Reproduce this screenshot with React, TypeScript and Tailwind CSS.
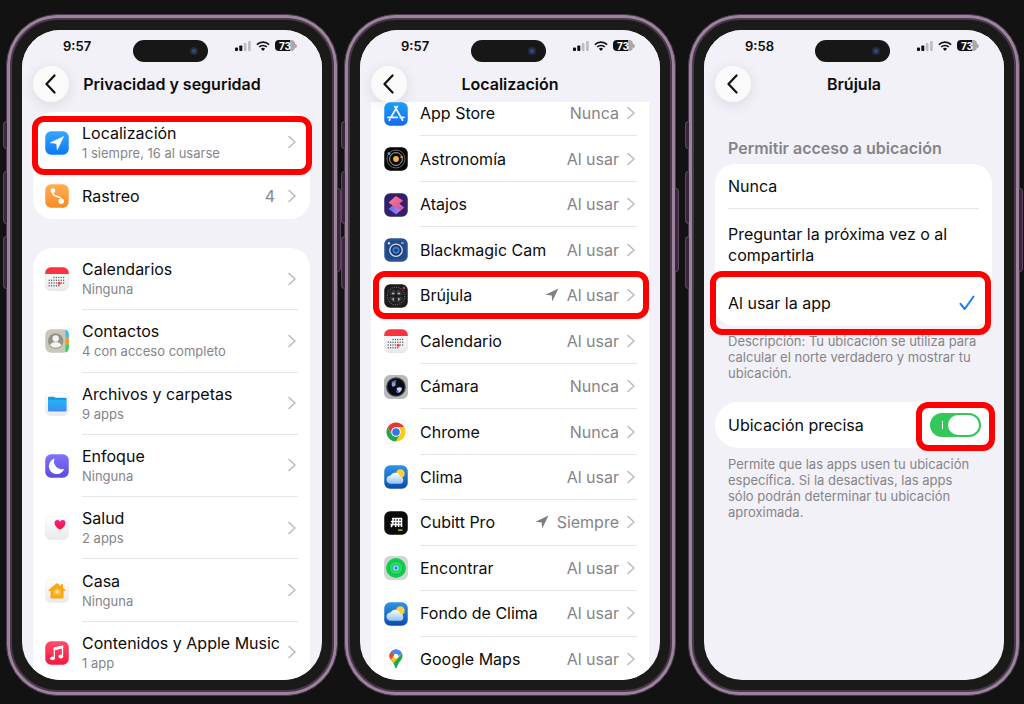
import type { ReactNode } from "react";

interface AppRow {
  name: string;
  access: string;
  icon: ReactNode;
  recent?: boolean;
  highlighted?: boolean;
}

interface PermissionRow {
  name: string;
  detail: string;
  icon: ReactNode;
}

// Shared by every app icon, so they are declared once for the page
function IconGradients() {
  return (
    <svg className="absolute size-0" aria-hidden="true">
      <defs>
        <linearGradient id="blue" x1="0" y1="0" x2="0" y2="1">
          <stop offset="0" stopColor="#37a6ff" />
          <stop offset="1" stopColor="#0a78fa" />
        </linearGradient>
        <linearGradient id="store" x1="0" y1="0" x2="0" y2="1">
          <stop offset="0" stopColor="#1fa5f8" />
          <stop offset="1" stopColor="#1767ee" />
        </linearGradient>
        <linearGradient id="orange" x1="0" y1="0" x2="0" y2="1">
          <stop offset="0" stopColor="#ffae55" />
          <stop offset="1" stopColor="#fb8a24" />
        </linearGradient>
        <linearGradient id="purple" x1="0" y1="0" x2="0" y2="1">
          <stop offset="0" stopColor="#8173fb" />
          <stop offset="1" stopColor="#5a4de0" />
        </linearGradient>
        <linearGradient id="pink" x1="0" y1="0" x2="0" y2="1">
          <stop offset="0" stopColor="#ff4d6a" />
          <stop offset="1" stopColor="#fa1540" />
        </linearGradient>
        <linearGradient id="heart" x1="0" y1="0" x2="0" y2="1">
          <stop offset="0" stopColor="#fb1c8e" />
          <stop offset="1" stopColor="#fb1230" />
        </linearGradient>
        <linearGradient id="paper" x1="0" y1="0" x2="0" y2="1">
          <stop offset="0" stopColor="#ffffff" />
          <stop offset="1" stopColor="#e9e9eb" />
        </linearGradient>
        <linearGradient id="sky" x1="0" y1="0" x2="0" y2="1">
          <stop offset="0" stopColor="#2f93e6" />
          <stop offset="1" stopColor="#0c4cae" />
        </linearGradient>
        <linearGradient id="cloud" x1="0" y1="0" x2="0" y2="1">
          <stop offset="0" stopColor="#ffffff" />
          <stop offset="1" stopColor="#8fc4f3" />
        </linearGradient>
        <linearGradient id="folder" x1="0" y1="0" x2="0" y2="1">
          <stop offset="0" stopColor="#22b4f6" />
          <stop offset="1" stopColor="#3f8bf0" />
        </linearGradient>
        <linearGradient id="warm" x1="0" y1="0" x2="1" y2="1">
          <stop offset="0" stopColor="#ff7d88" />
          <stop offset="1" stopColor="#d64a9c" />
        </linearGradient>
        <linearGradient id="cool" x1="0" y1="0" x2="1" y2="0">
          <stop offset="0" stopColor="#5a6df0" />
          <stop offset="1" stopColor="#c58af0" />
        </linearGradient>
      </defs>
    </svg>
  );
}

function IconTile({ children, fill, stroke }: { children?: ReactNode; fill: string; stroke?: string }) {
  return (
    <svg viewBox="0 0 24 24" className="size-6 shrink-0" aria-hidden="true">
      <rect x="0.25" y="0.25" width="23.5" height="23.5" rx="5.8" fill={fill} stroke={stroke} strokeWidth="0.5" />
      {children}
    </svg>
  );
}

function LocationIcon() {
  return (
    <IconTile fill="url(#blue)">
      <path d="M18.6 5.6 5.3 11.7l6.3.8.7 6.2z" fill="#fff" stroke="#fff" strokeWidth="0.6" strokeLinejoin="round" />
    </IconTile>
  );
}

function TrackingIcon() {
  return (
    <IconTile fill="url(#orange)">
      <path
        d="M7.8 6.6c-.5 4.8 1.5 5.2 4.2 5.8 2.900.7 4.300 1.300 4.300 5"
        fill="none"
        stroke="#fff"
        strokeWidth="1.5"
        strokeLinecap="round"
      />
      <circle cx="7.9" cy="6.7" r="2.4" fill="#fff" />
      <circle cx="16.2" cy="17.2" r="2.7" fill="#fff" />
    </IconTile>
  );
}

const calendarDots = [
  [9, 10.5], [11.4, 10.5], [13.8, 10.5], [16.2, 10.5], [18.6, 10.5],
  [4.2, 13.3], [6.6, 13.3], [9, 13.3], [11.4, 13.3], [13.8, 13.3], [16.2, 13.3], [18.6, 13.3],
  [4.2, 16], [6.6, 16], [9, 16], [11.4, 16], [16.2, 16], [18.6, 16],
  [4.2, 18.7], [6.6, 18.7], [9, 18.7], [11.4, 18.7], [13.8, 18.7],
];

function CalendarIcon() {
  return (
    <IconTile fill="url(#paper)" stroke="#dedee0">
      <path d="M.2 7V6A5.800 5.800 0 0 1 6 .2h12A5.800 5.800 0 0 1 23.800 6v1z" fill="#f9343f" />
      {calendarDots.map(([x, y]) => (
        <circle key={`${x}-${y}`} cx={x} cy={y} r="0.7" fill="#5a5a5c" />
      ))}
      <circle cx="14.2" cy="16.2" r="1.5" fill="#fa3a40" />
    </IconTile>
  );
}

function ContactsIcon() {
  return (
    <IconTile fill="#c9c8b8">
      <path d="M20.500.4c2 .6 3.300 2.700 3.300 5.400V8h-3.300z" fill="#39b9f5" />
      <path d="M20.500 8h3.300v7.500h-3.300z" fill="#fd9528" />
      <path d="M20.500 15.500h3.300v2.700c0 2.700-1.300 4.800-3.300 5.400z" fill="#2fd35c" />
      <circle cx="10.7" cy="12" r="7.7" fill="#93938a" />
      <circle cx="10.7" cy="9.5" r="3.2" fill="#f4f4ee" />
      <path d="M5 16.300c1-2.500 3.200-3.400 5.700-3.400s4.700.9 5.700 3.400a7.700 7.700 0 0 1-11.400 0z" fill="#f4f4ee" />
    </IconTile>
  );
}

function FilesIcon() {
  return (
    <IconTile fill="url(#paper)" stroke="#e6e6e8">
      <path d="M3 6.200c0-.9.5-1.400 1.400-1.400h4.200c.9 0 1.200 1 2.100 1h9.500c.9 0 1.400.5 1.400 1.400V9H3z" fill="#1a98e0" />
      <path d="M3 8h18.600v10.200c0 .9-.5 1.400-1.400 1.400H4.400c-.9 0-1.400-.5-1.400-1.400z" fill="url(#folder)" />
    </IconTile>
  );
}

function FocusIcon() {
  return (
    <IconTile fill="url(#purple)">
      <path d="M9.600 4.600a7.600 7.600 0 0 0 9.700 10.100A7.900 7.900 0 1 1 9.600 4.600z" fill="#fff" />
    </IconTile>
  );
}

function HealthIcon() {
  return (
    <IconTile fill="url(#paper)" stroke="#ececee">
      <path
        d="M15 13.800c-3.500-2.400-5.500-4.500-5.500-6.900 0-3.300 4-4.100 5.500-1.400 1.500-2.700 5.500-1.900 5.500 1.400 0 2.400-2 4.500-5.500 6.900z"
        fill="url(#heart)"
      />
    </IconTile>
  );
}

function HomeIcon() {
  return (
    <IconTile fill="url(#paper)" stroke="#ececee">
      <path
        d="M12 4 3.800 10.800c-.5.5-.2 1.200.5 1.200h1.200v6c0 1 .5 1.500 1.500 1.500h10c1 0 1.500-.5 1.500-1.500v-6h1.200c.7 0 1-.7.500-1.200L18 9V5.200h-2.200v2z"
        fill="#fda50f"
      />
      <path d="m12 8.500-4 3.300v4.700h8v-4.700z" fill="#fdba2c" />
      <circle cx="12" cy="12.8" r="1.8" fill="#fff2bd" />
    </IconTile>
  );
}

function MusicIcon() {
  return (
    <IconTile fill="url(#pink)">
      <path d="M9.300 17V7.200l8.200-1.800V15" fill="none" stroke="#fff" strokeWidth="1.3" />
      <path d="m8.700 6.600 9.400-2.200v2.900L8.700 9.400z" fill="#fff" />
      <ellipse cx="7.5" cy="17.3" rx="2.4" ry="1.9" fill="#fff" />
      <ellipse cx="15.8" cy="15.5" rx="2.4" ry="1.9" fill="#fff" />
    </IconTile>
  );
}

function AppStoreIcon() {
  return (
    <IconTile fill="url(#store)">
      <path
        d="M13.200 4.500 6.900 15.400M10.800 4.500l7.700 13.600M4 15.400h9.300M16.300 15.400H20M5.900 17.300l-.5.900"
        fill="none"
        stroke="#e9f6ff"
        strokeWidth="1.8"
        strokeLinecap="round"
      />
    </IconTile>
  );
}

function AstronomyIcon() {
  return (
    <IconTile fill="#060606">
      <circle cx="12" cy="12" r="9" fill="none" stroke="#77705f" strokeWidth="0.9" />
      <circle cx="12" cy="12" r="6.4" fill="none" stroke="#b4b4b0" strokeWidth="0.9" />
      <circle cx="12" cy="12" r="2.9" fill="#f5b13d" />
      <circle cx="5" cy="6.5" r="1.5" fill="#42a2de" />
      <circle cx="17.7" cy="10" r="1.3" fill="#ef8d4b" />
    </IconTile>
  );
}

function ShortcutsIcon() {
  return (
    <IconTile fill="#33206b">
      <path d="m12.500 9.500 6.500 5-7 6-6.500-4.500z" fill="url(#cool)" stroke="url(#cool)" strokeWidth="1.5" strokeLinejoin="round" />
      <path d="m12 3.800 6.200 3.900-5.700 4.300 6.500 2.500-2.500 2.200L5.300 9.600z" fill="url(#warm)" stroke="url(#warm)" strokeWidth="1.2" strokeLinejoin="round" />
    </IconTile>
  );
}

function BlackmagicIcon() {
  return (
    <IconTile fill="#2b5292">
      <rect x="2.200" y="3" width="19.6" height="18" rx="3.5" fill="#234a88" />
      <circle cx="12" cy="12.2" r="6.8" fill="#d3def0" />
      <circle cx="12" cy="12.2" r="5.5" fill="#173568" />
      <circle cx="12" cy="12.2" r="3.6" fill="#3f7ac4" />
      <circle cx="12" cy="12.2" r="1.8" fill="#1c417a" />
      <circle cx="5" cy="5.2" r="1.2" fill="#d3def0" />
      <path d="M17 5h3" stroke="#d3def0" strokeWidth="1.2" />
    </IconTile>
  );
}

function CompassIcon() {
  return (
    <IconTile fill="#1b1b1d">
      <circle cx="12" cy="12" r="8.8" fill="none" stroke="#757578" strokeWidth="1.1" strokeDasharray="1 1.3" />
      <circle cx="12" cy="12" r="6.8" fill="#37373a" />
      <path d="M8 9.500h2.400M13.600 9.500H16M9.200 14v2.500M14.800 14v2.500" stroke="#b4b4b6" strokeWidth="1.4" />
      <path d="M12 5v14M5 12h14" stroke="#0b0b0c" strokeWidth="1" />
      <circle cx="20" cy="4" r="1.3" fill="#d4383c" />
    </IconTile>
  );
}

function CameraIcon() {
  return (
    <IconTile fill="#b9b9bb" stroke="#a5a5a7">
      <circle cx="12" cy="12" r="9.8" fill="#3f4048" />
      <circle cx="12" cy="12" r="8.6" fill="#090b16" />
      <path d="M7.500 6.800c1.500-1.200 3-1.700 5-1.600l-1.400 5.500-3 1z" fill="#5369a8" />
      <circle cx="9.6" cy="9.5" r="1.9" fill="#8c9fdd" />
      <path d="M12.500 13.500c1.500-1.500 4-1.800 5.500-.5-.2 2.500-1.700 4.500-3.800 5z" fill="#c8d5f6" />
      <circle cx="13.400" cy="16.600" r="1.3" fill="#4c67ba" />
    </IconTile>
  );
}

function ChromeIcon() {
  return (
    <IconTile fill="#fff" stroke="#ececee">
      <path d="M12 7.200h8.300A9.600 9.600 0 0 0 3.700 7.200L7.800 14.400z" fill="#e23b2f" />
      <path d="M7.840 14.400 3.690 7.200A9.600 9.600 0 0 0 12 21.600l4.160-7.200z" fill="#26a34b" />
      <path d="M16.160 14.400 12 21.600A9.600 9.600 0 0 0 20.310 7.200H12z" fill="#fcc917" />
      <circle cx="12" cy="12" r="4.8" fill="#fff" />
      <circle cx="12" cy="12" r="3.8" fill="#2f78ea" />
    </IconTile>
  );
}

function WeatherIcon() {
  return (
    <IconTile fill="url(#sky)">
      <circle cx="16.3" cy="8.7" r="4.4" fill="#fdcf3c" />
      <path d="M7 18.800a4.200 4.200 0 0 1-.6-8.400 5.300 5.300 0 0 1 9.700 1.200 3.700 3.700 0 0 1 .6 7.200z" fill="url(#cloud)" />
    </IconTile>
  );
}

function CubittIcon() {
  return (
    <IconTile fill="#0b0b0b">
      <path
        d="M8 7.500h9.500V16M7 10.500h10.500M6.500 13.500h11M9 7.500v3c0 2.700-.7 4.200-2 5.500M11.700 7.500V16M14.600 7.500V16"
        fill="none"
        stroke="#fff"
        strokeWidth="1.5"
      />
      <path d="M14 19.200h4.500" stroke="#d8d732" strokeWidth="1.3" />
    </IconTile>
  );
}

function FindIcon() {
  return (
    <IconTile fill="#d5d6d4" stroke="#c6c6c6">
      <circle cx="12" cy="12" r="10" fill="#10cf4e" />
      <circle cx="12" cy="12" r="6.8" fill="#22df61" stroke="#0eb847" strokeWidth="1" />
      <circle cx="12" cy="12" r="3.7" fill="#1dbd94" />
      <circle cx="12" cy="12" r="2.6" fill="#dff3ff" />
      <circle cx="12" cy="12" r="1.7" fill="#2382ee" />
    </IconTile>
  );
}

function MapsIcon() {
  return (
    <IconTile fill="#fff" stroke="#ececee">
      <clipPath id="pin">
        <path d="M12 21.500c-.9 0-1.200-2.700-2.500-5-1.500-2.400-4-4.200-4-7.400a6.500 6.500 0 0 1 13 0c0 3.200-2.500 5-4 7.400-1.300 2.300-1.600 5-2.500 5z" />
      </clipPath>
      <g clipPath="url(#pin)">
        <path d="M4 2h16v20H4z" fill="#1fa754" />
        <path d="M4 2h16L12 9.100 5.500 17H4z" fill="#fbc11b" />
        <path d="M18.800 5.500 8 18H4v-4L15 2z" fill="#fbc11b" />
        <path d="M4 2h8l-1 6-6.500 6.500z" fill="#e8473a" />
        <path d="m7 5 4-3h9l-1 4-3.500 2.200L12 9.200z" fill="#4389f5" />
      </g>
      <circle cx="12" cy="9.2" r="2.4" fill="#fff" />
    </IconTile>
  );
}

function Chevron() {
  return (
    <svg viewBox="0 0 8 14" className="h-3.5 w-2 shrink-0" aria-hidden="true">
      <path d="m1 1.500 6 5.500-6 5.500" fill="none" stroke="#bcbcc0" strokeWidth="1.6" strokeLinecap="round" strokeLinejoin="round" />
    </svg>
  );
}

function LocationArrow() {
  return (
    <svg viewBox="0 0 14 14" className="size-3.5 shrink-0" aria-hidden="true">
      <path d="M13.500.5.500 6.800l6.200.6.500 6.200z" fill="#7f7f83" />
    </svg>
  );
}

function Highlight({ className }: { className: string }) {
  return <span aria-hidden="true" className={`pointer-events-none absolute z-20 border-6 border-[#fe0000] ${className}`} />;
}

function StatusBar({ time }: { time: string }) {
  return (
    <div className="grid grid-cols-[1fr_auto_1fr] items-start pt-2.5">
      <time className="pl-[41px] text-[13px] font-semibold leading-3">{time}</time>
      <div className="mr-[3px] flex h-[22px] w-[75px] items-center justify-end rounded-full bg-[#171717] pr-2.5">
        <span className="flex size-2 items-center justify-center rounded-full bg-[#252c3a]">
          <span className="size-1 rounded-full bg-[#24508c]" />
        </span>
      </div>
      <div className="flex items-center justify-end gap-[5px] pr-[25px]">
        <svg viewBox="0 0 16 10" className="h-2.5 w-4" aria-hidden="true">
          <rect x="0" y="6.5" width="3" height="3.5" rx="0.8" fill="#111" />
          <rect x="4.3" y="4.5" width="3" height="5.5" rx="0.8" fill="#111" />
          <rect x="8.7" y="2" width="2.8" height="8" rx="0.8" fill="#bfbfc3" />
          <rect x="13" y="0" width="2.8" height="10" rx="0.8" fill="#bfbfc3" />
        </svg>
        <svg viewBox="0 0 14 10" className="h-2.5 w-3.5" aria-hidden="true">
          <path d="M.9 3.600a8.800 8.800 0 0 1 12.200 0M3.200 6a5.600 5.600 0 0 1 7.600 0" fill="none" stroke="#111" strokeWidth="1.7" />
          <path d="M7 9.900 4.900 7.800a3 3 0 0 1 4.200 0z" fill="#111" />
        </svg>
        <div className="flex items-center">
          <span className="flex h-[11px] w-5 items-center justify-center rounded-[4px] bg-linear-to-r from-[#111] from-75% to-[#a9a9ad] to-75% text-[10px] font-bold leading-none text-white">
            73
          </span>
          <span className="h-1 w-0.5 rounded-r-full bg-[#a9a9ad]" />
        </div>
      </div>
    </div>
  );
}

function ScreenHeader({ time, title }: { time: string; title: string }) {
  return (
    <header className="relative z-10 bg-[#f2f1f7]">
      <StatusBar time={time} />
      <div className="grid grid-cols-[36px_1fr_36px] items-center px-[11px] pt-1">
        <button
          type="button"
          aria-label="Atrás"
          className="flex size-9 items-center justify-center rounded-full bg-[#fafafb] shadow-[0_3px_14px_rgba(0,0,0,0.10)]"
        >
          <svg viewBox="0 0 12 20" className="h-5 w-3" aria-hidden="true">
            <path d="m9.500 1.500-8 8.500 8 8.500" fill="none" stroke="#111" strokeWidth="2.2" strokeLinecap="round" strokeLinejoin="round" />
          </svg>
        </button>
        <h1 className="whitespace-nowrap text-center text-base font-semibold">{title}</h1>
      </div>
    </header>
  );
}

function Phone({ label, className = "", children }: { label: string; className?: string; children: ReactNode }) {
  return (
    <section
      aria-label={label}
      className={`relative flex min-w-0 flex-1 rounded-[52px] border border-[#4b384c] bg-[#9b849b] p-[3px] ${className}`}
    >
      <span className="absolute top-[106px] -left-1 h-7 w-1 rounded-l-sm border border-r-0 border-[#5d4560] bg-[#3a273d]" />
      <span className="absolute top-[156px] -left-1 h-[53px] w-1 rounded-l-sm border border-r-0 border-[#5d4560] bg-[#3a273d]" />
      <span className="absolute top-[221px] -left-1 h-[53px] w-1 rounded-l-sm border border-r-0 border-[#5d4560] bg-[#3a273d]" />
      <span className="absolute top-[173px] -right-1 h-[84px] w-1 rounded-r-sm border border-l-0 border-[#5d4560] bg-[#3a273d]" />
      <div className="flex min-w-0 flex-1 rounded-[48px] border-2 border-[#4b384c] bg-[#1a1a19] p-2.5">
        <div className="flex min-w-0 flex-1 flex-col overflow-hidden rounded-[38px] bg-[#f2f1f7]">{children}</div>
      </div>
    </section>
  );
}

function PermissionLink({ row, divider = false }: { row: PermissionRow; divider?: boolean }) {
  return (
    <a href="#" className="flex min-h-[61px] flex-1 items-center gap-[13px] pl-3">
      {row.icon}
      <span className={`mr-3 flex h-full min-w-0 flex-1 items-center justify-between border-b pr-0.5 ${divider ? "border-[#e6e6e8]" : "border-transparent"}`}>
        <span className="flex flex-col pt-0.5 whitespace-nowrap">
          <span className="text-base leading-[19px]">{row.name}</span>
          <span className="text-[13px] leading-5 text-[#858589]">{row.detail}</span>
        </span>
        <Chevron />
      </span>
    </a>
  );
}

const locationRow: PermissionRow = { name: "Localización", detail: "1 siempre, 16 al usarse", icon: <LocationIcon /> };

const permissionRows: PermissionRow[] = [
  { name: "Calendarios", detail: "Ninguna", icon: <CalendarIcon /> },
  { name: "Contactos", detail: "4 con acceso completo", icon: <ContactsIcon /> },
  { name: "Archivos y carpetas", detail: "9 apps", icon: <FilesIcon /> },
  { name: "Enfoque", detail: "Ninguna", icon: <FocusIcon /> },
  { name: "Salud", detail: "2 apps", icon: <HealthIcon /> },
  { name: "Casa", detail: "Ninguna", icon: <HomeIcon /> },
  { name: "Contenidos y Apple Music", detail: "1 app", icon: <MusicIcon /> },
];

function PrivacyScreen() {
  return (
    <>
      <ScreenHeader time="9:57" title="Privacidad y seguridad" />
      <ul className="mt-2.5 mr-3 ml-[11px] rounded-[20px] bg-white">
        <li className="relative flex">
          <PermissionLink row={locationRow} />
          <Highlight className="-right-0.5 -bottom-0.5 -left-px top-1 rounded-xl" />
        </li>
        <li>
          <a href="#" className="flex h-[46px] items-center gap-[13px] pr-3.5 pl-3">
            <TrackingIcon />
            <span className="flex-1 text-base">Rastreo</span>
            <span className="text-base text-[#858589]">4</span>
            <Chevron />
          </a>
        </li>
      </ul>
      <ul className="mt-[29px] mr-3 -mb-1 ml-[11px] flex flex-1 flex-col rounded-t-[20px] bg-white">
        {permissionRows.map((row, i) => (
          <li key={row.name} className="flex flex-1">
            <PermissionLink row={row} divider={i < permissionRows.length - 1} />
          </li>
        ))}
      </ul>
    </>
  );
}

const appRows: AppRow[] = [
  { name: "App Store", access: "Nunca", icon: <AppStoreIcon /> },
  { name: "Astronomía", access: "Al usar", icon: <AstronomyIcon /> },
  { name: "Atajos", access: "Al usar", icon: <ShortcutsIcon /> },
  { name: "Blackmagic Cam", access: "Al usar", icon: <BlackmagicIcon /> },
  { name: "Brújula", access: "Al usar", icon: <CompassIcon />, recent: true, highlighted: true },
  { name: "Calendario", access: "Al usar", icon: <CalendarIcon /> },
  { name: "Cámara", access: "Nunca", icon: <CameraIcon /> },
  { name: "Chrome", access: "Nunca", icon: <ChromeIcon /> },
  { name: "Clima", access: "Al usar", icon: <WeatherIcon /> },
  { name: "Cubitt Pro", access: "Siempre", icon: <CubittIcon />, recent: true },
  { name: "Encontrar", access: "Al usar", icon: <FindIcon /> },
  { name: "Fondo de Clima", access: "Al usar", icon: <WeatherIcon /> },
  { name: "Google Maps", access: "Al usar", icon: <MapsIcon /> },
];

function LocationScreen() {
  return (
    <>
      <ScreenHeader time="9:57" title="Localización" />
      {/* scrolled list: its first row slides under the header */}
      <ul className="-mt-[11px] -mb-0.5 mx-[11px] flex flex-1 flex-col bg-white">
        {appRows.map((row) => (
          <li key={row.name} className="relative flex flex-1">
            <a href="#" className="flex flex-1 items-center gap-3 pl-[13px]">
              {row.icon}
              <span className="mr-3 flex h-full flex-1 items-center gap-2 border-b border-[#e6e6e8] pr-0.5 whitespace-nowrap">
                <span className="flex-1 text-base">{row.name}</span>
                {row.recent && <LocationArrow />}
                <span className="text-base text-[#858589]">{row.access}</span>
                <Chevron />
              </span>
            </a>
            {row.highlighted && <Highlight className="-top-0.5 right-0 -bottom-px left-0.5 rounded-xl" />}
          </li>
        ))}
      </ul>
    </>
  );
}

function CompassScreen() {
  return (
    <>
      <ScreenHeader time="9:58" title="Brújula" />
      <div className="mr-3 ml-[11px] flex flex-col">
        <h2 className="mt-[34px] pl-[13px] text-base font-semibold text-[#858589]">Permitir acceso a ubicación</h2>
        <div className="mt-1 rounded-[20px] bg-white px-[13px] text-base">
          <button type="button" className="flex h-[45px] w-full items-center border-b border-[#e6e6e8]">
            Nunca
          </button>
          <button type="button" className="flex h-[71px] w-full items-center text-left leading-[21px]">
            Preguntar la próxima vez o al compartirla
          </button>
          <div className="relative">
            <button type="button" aria-pressed="true" className="flex h-[46px] w-full items-center justify-between pr-1">
              Al usar la app
              <svg viewBox="0 0 16 16" className="size-4" aria-hidden="true">
                <path d="m1.500 8.800 4.200 5.200L14.500 1.500" fill="none" stroke="#1a7df3" strokeWidth="2" strokeLinecap="round" strokeLinejoin="round" />
              </svg>
            </button>
            <Highlight className="-top-[9px] -right-3 -bottom-[9px] -left-[18px] rounded-xl" />
          </div>
        </div>
        <p className="mt-[7px] px-[13px] text-[13px] leading-4 text-[#858589]">
          Descripción: Tu ubicación se utiliza para calcular el norte verdadero y mostrar tu ubicación.
        </p>
        <label className="mt-[21px] flex h-[46px] items-center justify-between rounded-full bg-white pr-[11px] pl-[13px] text-base">
          Ubicación precisa
          <span className="relative flex">
            <input
              type="checkbox"
              role="switch"
              defaultChecked
              className="h-6 w-[51px] appearance-none rounded-full bg-[#d8d8dc] checked:bg-[#34c759]"
            />
            <span className="absolute top-1/2 left-3 h-2 w-px -translate-y-1/2 bg-white" />
            <span className="absolute top-0.5 right-0.5 h-5 w-[31px] rounded-full bg-white" />
            <Highlight className="-inset-x-3.5 -top-[11px] -bottom-3.5 rounded-xl" />
          </span>
        </label>
        <p className="mt-2 px-[13px] text-[13px] leading-4 text-[#858589]">
          Permite que las apps usen tu ubicación específica. Si la desactivas, las apps sólo podrán determinar tu
          ubicación aproximada.
        </p>
      </div>
    </>
  );
}

export default function App() {
  return (
    <main className="flex h-screen min-h-[704px] bg-[#121212] pt-3.5 pr-1 pb-2 pl-1.5 font-[Inter,'Liberation_Sans',sans-serif] text-[#0c0c0c]">
      <IconGradients />
      <Phone label="Privacidad y seguridad">
        <PrivacyScreen />
      </Phone>
      <Phone label="Localización" className="ml-1.5">
        <LocationScreen />
      </Phone>
      <Phone label="Brújula" className="ml-3">
        <CompassScreen />
      </Phone>
    </main>
  );
}
